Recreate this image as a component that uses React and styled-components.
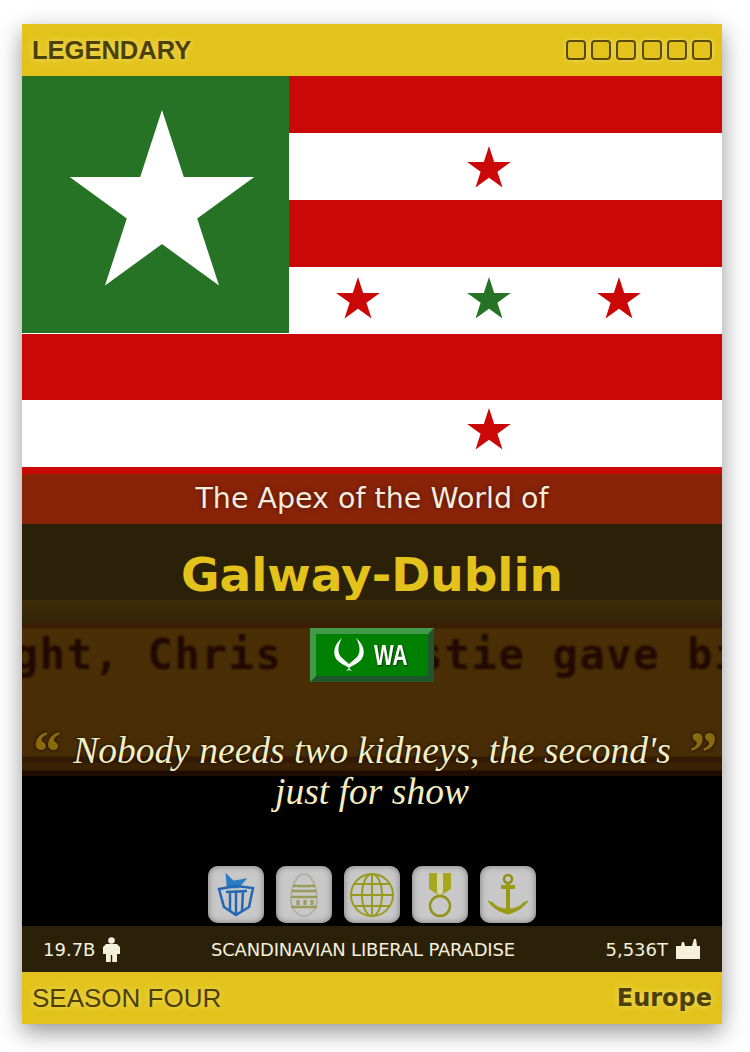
import React from "react";
import styled, { createGlobalStyle } from "styled-components";

const GlobalStyle = createGlobalStyle`
    html, body {
        margin: 0;
        background: #fff;
    }
`;

const starPoints = (cx, cy, r) => {
    const pts = [];
    for (let i = 0; i < 10; i++) {
        const radius = i % 2 === 0 ? r : r * 0.382;
        const a = (Math.PI / 5) * i - Math.PI / 2;
        pts.push(`${(cx + radius * Math.cos(a)).toFixed(1)},${(cy + radius * Math.sin(a)).toFixed(1)}`);
    }
    return pts.join(" ");
};

const Flag = () => (
    <FlagSvg viewBox="0 0 700 398" width="700" height="398">
        <rect width="700" height="398" fill="#cb0808" />
        <rect y="57" width="700" height="67" fill="#fff" />
        <rect y="191" width="700" height="67" fill="#fff" />
        <rect y="324" width="700" height="67" fill="#fff" />
        <rect width="267" height="257" fill="#267326" />
        <polygon points={starPoints(140, 131, 97)} fill="#fff" />
        <polygon points={starPoints(467, 93, 23)} fill="#cb0808" />
        <polygon points={starPoints(336, 224, 23)} fill="#cb0808" />
        <polygon points={starPoints(467, 224, 23)} fill="#267326" />
        <polygon points={starPoints(597, 224, 23)} fill="#cb0808" />
        <polygon points={starPoints(467, 355, 23)} fill="#cb0808" />
    </FlagSvg>
);

const Laurel = () => (
    <svg width="34" height="36" viewBox="0 0 34 36">
        <path d="M10 1 C2 7 0 17 5 23 C9 27 13 28 17 31 L14 34 L17 33 L20 34 L17 31 C21 28 25 27 29 23 C34 17 32 7 24 1 C28 8 29 15 25 20 C22 23 19 25 17 27 C15 25 12 23 9 20 C5 15 6 8 10 1 Z" fill="#fff" />
    </svg>
);

const Gift = () => (
    <svg width="40" height="44" viewBox="0 0 40 44" fill="none" stroke="#2468b4" strokeWidth="2.5">
        <path d="M11 3 L17 9 L28 7 L22 14 L12 14 Z" fill="#2a7cc4" stroke="#2a7cc4" />
        <path d="M3 16 L20 13 L37 15 L33 34 L20 42 L8 34 Z" />
        <path d="M14 18 L14 38 M20 18 L20 42 M27 18 L26 38 M10 19 L31 18" />
    </svg>
);

const Egg = () => (
    <svg width="32" height="46" viewBox="0 0 32 46" fill="none" stroke="#9a9a5a" strokeWidth="2">
        <path d="M16 2 C8 2 3 16 3 27 C3 37 9 44 16 44 C23 44 29 37 29 27 C29 16 24 2 16 2 Z" stroke="#b0b0a0" />
        <path d="M5 14 H27 M4 19 H28 M3 25 H29 M3 35 H29" strokeWidth="2.4" />
        <path d="M10 28 V33 M17 28 V33 M24 28 V33" strokeWidth="3" />
    </svg>
);

const Globe = () => (
    <svg width="46" height="46" viewBox="0 0 46 46" fill="none" stroke="#9a9a20" strokeWidth="2">
        <circle cx="23" cy="23" r="21" />
        <ellipse cx="23" cy="23" rx="10" ry="21" />
        <path d="M23 2 V44 M2 23 H44 M5 12 H41 M5 34 H41" />
    </svg>
);

const Medal = () => (
    <svg width="26" height="46" viewBox="0 0 26 46" fill="none">
        <path d="M2 1 H24 V17 L13 24 L2 17 Z" fill="#a8a820" />
        <path d="M10 1 H16 V21 L13 23 L10 21 Z" fill="#d4d4b0" />
        <circle cx="13" cy="34" r="10" stroke="#93931a" strokeWidth="2.5" />
    </svg>
);

const Anchor = () => (
    <svg width="42" height="46" viewBox="0 0 42 46" fill="none">
        <circle cx="21" cy="7" r="4" stroke="#8f8f10" strokeWidth="2.5" />
        <path d="M14 15 H28 M21 11 V42" stroke="#9a9a14" strokeWidth="4" />
        <path d="M1 29 C6 36 13 40 21 42 C29 40 36 36 41 29 L36 31 C33 35 27 37 21 37 C15 37 9 35 6 31 Z" fill="#9a9a14" stroke="#9a9a14" />
    </svg>
);

const Person = () => (
    <svg width="17" height="25" viewBox="0 0 17 25" fill="#f4f0dc">
        <circle cx="8.5" cy="3.5" r="3.3" />
        <path d="M3 7 H14 L17 10 V17 H14 V25 H9.2 V18 H7.8 V25 H3 V17 H0 V10 Z" />
    </svg>
);

const Factory = () => (
    <svg width="24" height="20" viewBox="0 0 24 20" fill="#f4f0dc">
        <path d="M0 7 H5 L6 3 H8 L9 7 H16 L18 0 H20 L21 7 H24 V20 H0 Z" />
    </svg>
);

const App = () => (
    <>
        <GlobalStyle />
        <Card>
            <GoldBar>
                <Rarity>LEGENDARY</Rarity>
                <Badges>
                    {[0, 1, 2, 3, 4, 5].map((i) => (
                        <Pip key={i} />
                    ))}
                </Badges>
            </GoldBar>
            <Flag />
            <Title>The Apex of the World of</Title>
            <NameBar>Galway-Dublin</NameBar>
            <Stage>
                <Ticker>ght, Chris Christie gave bi</Ticker>
                <WaBadge>
                    <Laurel />
                    <WaText>WA</WaText>
                </WaBadge>
                <Motto>
                    <QuoteMark side="left">“</QuoteMark>
                    Nobody needs two kidneys, the second's just for show
                    <QuoteMark side="right">”</QuoteMark>
                </Motto>
                <Trophies>
                    <Trophy><Gift /></Trophy>
                    <Trophy><Egg /></Trophy>
                    <Trophy><Globe /></Trophy>
                    <Trophy><Medal /></Trophy>
                    <Trophy><Anchor /></Trophy>
                </Trophies>
            </Stage>
            <StatBar>
                <Stat>19.7B <Person /></Stat>
                <Category>SCANDINAVIAN LIBERAL PARADISE</Category>
                <Stat>5,536T <Factory /></Stat>
            </StatBar>
            <GoldBar>
                <Season>SEASON FOUR</Season>
                <Region>Europe</Region>
            </GoldBar>
        </Card>
    </>
);

export default App;

const Card = styled.div`
    width: 700px;
    margin: 24px 0 28px 22px;
    display: flex;
    flex-direction: column;
    background: #000;
    box-shadow: 0 8px 22px rgba(0, 0, 0, 0.42);
    font-family: "DejaVu Sans", Verdana, sans-serif;
`;

const GoldBar = styled.div`
    height: 52px;
    box-sizing: border-box;
    padding: 0 10px;
    background: #e3c31b;
    color: #4d3f08;
    display: flex;
    align-items: center;
    justify-content: space-between;
    font-size: 24px;
    text-shadow: 0 0 6px #f3e070;
`;

const Rarity = styled.span`
    font-family: "Liberation Sans", Arial, sans-serif;
    font-weight: 700;
    font-size: 25.5px;
`;

const Badges = styled.div`
    display: flex;
    gap: 5.2px;
`;

const Pip = styled.span`
    width: 20px;
    height: 20px;
    box-sizing: border-box;
    border: 2px solid #5a4a0a;
    border-radius: 4px;
    box-shadow: 0 0 5px #f3e070;
`;

const FlagSvg = styled.svg`
    display: block;
`;

const Title = styled.div`
    height: 50px;
    background: #8a2409;
    color: #f4ecdc;
    font-size: 28.5px;
    line-height: 50px;
    text-align: center;
    text-shadow: 0 0 5px #4a1002;
`;

const NameBar = styled.div`
    height: 76px;
    background: #2a2108;
    color: #e3c31b;
    font-size: 47px;
    font-weight: 700;
    line-height: 102px;
    text-align: center;
    overflow: hidden;
`;

const Stage = styled.div`
    position: relative;
    height: 326px;
    overflow: hidden;
    display: flex;
    flex-direction: column;
    align-items: center;
    background: linear-gradient(
        to bottom,
        #3f2c07 0,
        #33240a 23px,
        #3a1f05 24px,
        #3a1f05 28px,
        #4a2f06 29px,
        #482c05 156px,
        #331a04 157px,
        #331a04 162px,
        #3b2205 163px,
        #3b2205 170px,
        #200c02 171px,
        #200c02 176px,
        #000 176px
    );
`;

const Ticker = styled.div`
    position: absolute;
    top: 30px;
    left: -10px;
    width: 730px;
    text-align: center;
    white-space: nowrap;
    font-family: "DejaVu Sans Mono", monospace;
    font-size: 42px;
    font-weight: 700;
    letter-spacing: 1.7px;
    color: #210803;
    filter: blur(1.2px);
`;

const WaBadge = styled.div`
    position: relative;
    margin-top: 28px;
    width: 124px;
    height: 54px;
    box-sizing: border-box;
    display: flex;
    align-items: center;
    justify-content: center;
    gap: 8px;
    background: #008000;
    border: 6px solid;
    border-color: #43994a #20562b #20562b #43994a;
`;

const WaText = styled.span`
    font-family: "Liberation Sans", Arial, sans-serif;
    font-weight: 700;
    font-size: 29px;
    color: #fff;
    display: inline-block;
    width: 38px;
    transform: scaleX(0.72);
    transform-origin: left center;
    text-shadow: 1px 1px 2px #003000;
`;

const Motto = styled.div`
    position: relative;
    margin-top: 48px;
    width: 640px;
    text-align: center;
    font-family: "Liberation Serif", Georgia, serif;
    font-style: italic;
    font-size: 37.5px;
    line-height: 41px;
    color: #f4eec0;
    text-shadow: 0 0 3px #000;
`;

const QuoteMark = styled.span`
    position: absolute;
    top: -8px;
    ${(props) => (props.side === "left" ? "left: -22px;" : "right: -24px;")}
    font-size: 60px;
    font-weight: 700;
    line-height: 60px;
    color: #8a6a0c;
`;

const Trophies = styled.div`
    margin-top: auto;
    padding-bottom: 3px;
    display: flex;
    gap: 12px;
`;

const Trophy = styled.div`
    width: 56px;
    height: 57px;
    display: flex;
    align-items: center;
    justify-content: center;
    border-radius: 10px;
    background: #c8c8c8;
    box-shadow: inset 0 0 6px #777;
`;

const StatBar = styled.div`
    height: 46px;
    box-sizing: border-box;
    padding: 0 22px 0 21px;
    background: #2a2108;
    color: #f4f0dc;
    display: flex;
    align-items: center;
    justify-content: space-between;
    font-size: 18px;
`;

const Stat = styled.span`
    display: flex;
    align-items: center;
    gap: 8px;
`;

const Category = styled.span`
    letter-spacing: -0.2px;
`;

const Season = styled.span`
    font-family: "Liberation Sans", Arial, sans-serif;
    font-size: 26px;
`;

const Region = styled.span`
    font-weight: 700;
    font-size: 24px;
`;
